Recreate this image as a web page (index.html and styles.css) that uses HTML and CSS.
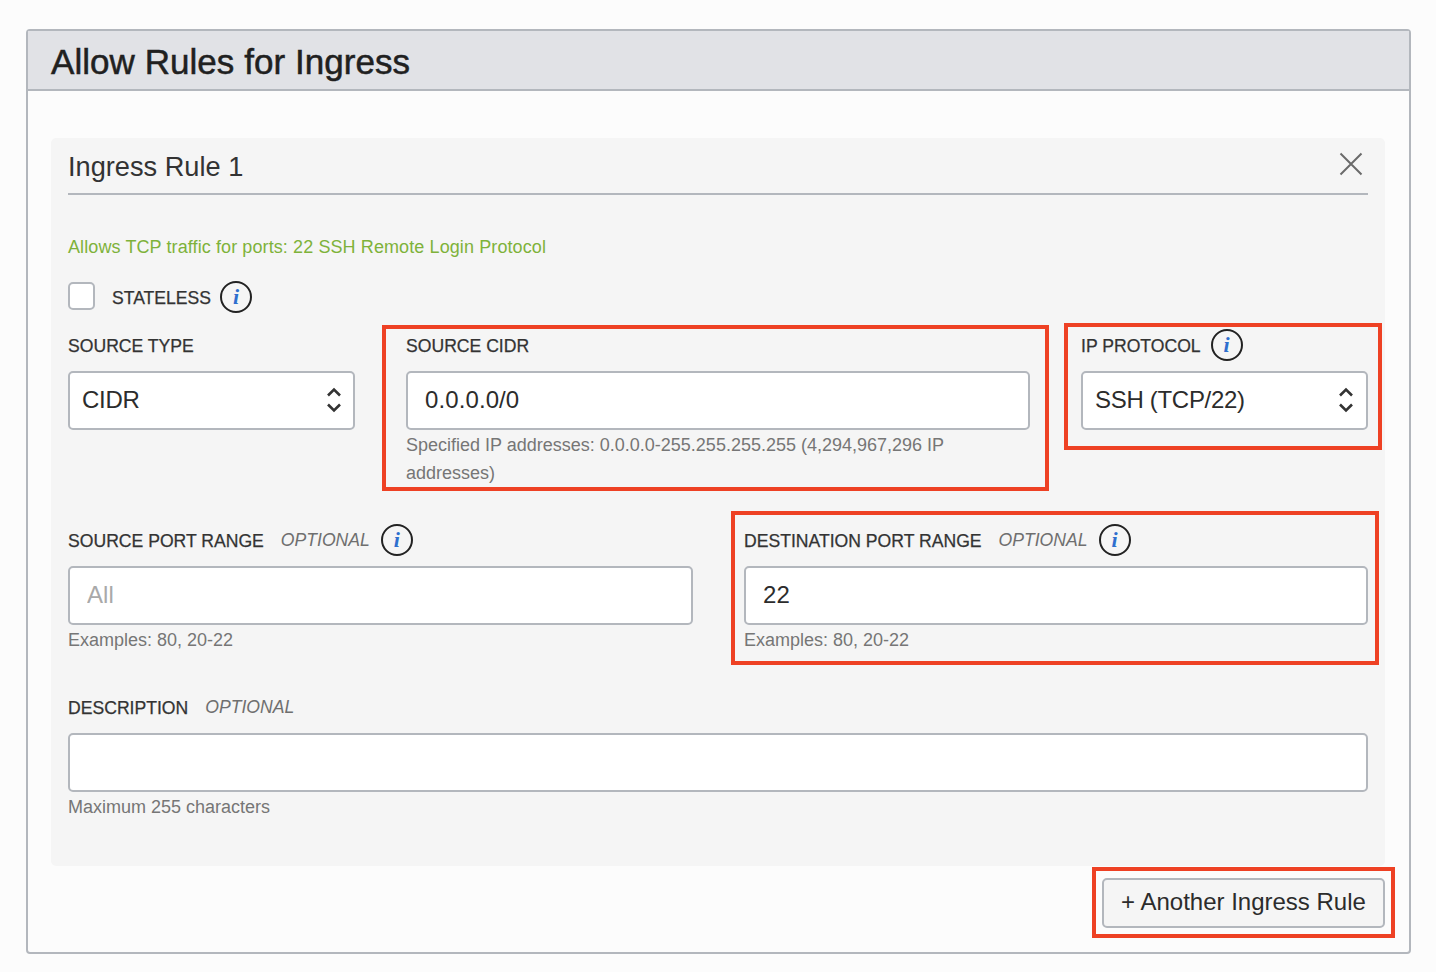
FILE: index.html
```html
<!DOCTYPE html>
<html lang="en">
<head>
    <meta charset="UTF-8">
    <title>Allow Rules for Ingress</title>
    <link rel="stylesheet" href="styles.css">
</head>
<body>
    <div class="panel">
        <div class="panel-header">
            <h1>Allow Rules for Ingress</h1>
        </div>
        <div class="panel-body">
            <div class="rule-card">
                <div class="rule-head">
                    <h2>Ingress Rule 1</h2>
                    <svg class="close-icon" width="24" height="24" viewBox="0 0 24 24">
                        <path d="M1.5 1.5 L22.5 22.5 M22.5 1.5 L1.5 22.5"></path>
                    </svg>
                </div>

                <p class="rule-note">Allows TCP traffic for ports: 22 SSH Remote Login Protocol</p>

                <div class="stateless-row">
                    <input class="check" type="checkbox">
                    <label class="field-label stateless-label">STATELESS</label>
                    <span class="info"><span class="info-i">i</span></span>
                </div>

                <div class="row row-three">
                    <div class="field">
                        <div class="label-row"><label class="field-label">SOURCE TYPE</label></div>
                        <div class="select-box">
                            <select class="control"><option>CIDR</option></select>
                            <svg class="updown" width="16" height="30" viewBox="0 0 16 30">
                                <path d="M2 10.5 L8 4.5 L14 10.5 M2 19.5 L8 25.5 L14 19.5"></path>
                            </svg>
                        </div>
                    </div>
                    <div class="field callout callout-cidr">
                        <div class="label-row"><label class="field-label">SOURCE CIDR</label></div>
                        <input class="control control-pad" type="text" value="0.0.0.0/0">
                        <p class="help">Specified IP addresses: 0.0.0.0-255.255.255.255 (4,294,967,296 IP addresses)</p>
                    </div>
                    <div class="field callout callout-protocol">
                        <div class="label-row">
                            <label class="field-label">IP PROTOCOL</label>
                            <span class="info"><span class="info-i">i</span></span>
                        </div>
                        <div class="select-box">
                            <select class="control"><option>SSH (TCP/22)</option></select>
                            <svg class="updown" width="16" height="30" viewBox="0 0 16 30">
                                <path d="M2 10.5 L8 4.5 L14 10.5 M2 19.5 L8 25.5 L14 19.5"></path>
                            </svg>
                        </div>
                    </div>
                </div>

                <div class="row row-two">
                    <div class="field">
                        <div class="label-row">
                            <label class="field-label">SOURCE PORT RANGE</label>
                            <span class="optional">OPTIONAL</span>
                            <span class="info"><span class="info-i">i</span></span>
                        </div>
                        <input class="control control-pad" type="text" placeholder="All">
                        <p class="help">Examples: 80, 20-22</p>
                    </div>
                    <div class="field callout callout-dest">
                        <div class="label-row">
                            <label class="field-label">DESTINATION PORT RANGE</label>
                            <span class="optional">OPTIONAL</span>
                            <span class="info"><span class="info-i">i</span></span>
                        </div>
                        <input class="control control-pad" type="text" value="22">
                        <p class="help">Examples: 80, 20-22</p>
                    </div>
                </div>

                <div class="row">
                    <div class="field">
                        <div class="label-row">
                            <label class="field-label">DESCRIPTION</label>
                            <span class="optional">OPTIONAL</span>
                        </div>
                        <input class="control control-pad" type="text">
                        <p class="help">Maximum 255 characters</p>
                    </div>
                </div>
            </div>

            <div class="actions">
                <div class="callout callout-button">
                    <button class="add-button" type="button">+ Another Ingress Rule</button>
                </div>
            </div>
        </div>
    </div>
</body>
</html>
```

FILE: styles.css
```css
* {
    box-sizing: border-box;
}

body {
    font-family: "Liberation Sans", Arial, sans-serif;
    background-color: #fcfcfc;
    color: #2c2c2c;
    margin: 0;
    padding: 29px 25px 18px 26px;
}

.panel {
    border: 2px solid #b3b7bd;
    border-radius: 4px;
    height: 925px;
}

.panel-header {
    background-color: #e1e2e6;
    border-bottom: 2px solid #b3b7bd;
    height: 60px;
    padding-left: 23px;
}

h1 {
    margin: 0;
    font-size: 35px;
    font-weight: normal;
    letter-spacing: 0.05px;
    line-height: 62px;
    color: #202020;
    -webkit-text-stroke: 0.5px #202020;
}

.panel-body {
    padding: 47px 24px 0 23px;
}

.rule-card {
    background-color: #f5f5f5;
    border-radius: 5px;
    padding: 0 17px 45px;
}

.rule-head {
    display: flex;
    justify-content: space-between;
    align-items: center;
    height: 57px;
    border-bottom: 2px solid #b3b7bd;
}

h2 {
    margin: 2px 0 0;
    font-size: 27.2px;
    font-weight: normal;
    color: #333;
}

.close-icon {
    margin-right: 5px;
    margin-bottom: 4px;
}

.close-icon path {
    fill: none;
    stroke: #6a6a6a;
    stroke-width: 2;
}

.rule-note {
    margin: 38px 0 0;
    font-size: 18px;
    letter-spacing: 0.1px;
    line-height: 28px;
    color: #7eb23a;
}

.stateless-row {
    display: flex;
    align-items: center;
    height: 32px;
    margin-top: 20px;
}

.check {
    appearance: none;
    width: 27px;
    height: 28px;
    margin: 0 17px 2px 0;
    background-color: #fff;
    border: 2px solid #b3b7bd;
    border-radius: 5px;
}

.stateless-label {
    margin-right: 9px;
}

.field-label {
    margin-top: 2px;
    font-size: 17.6px;
    color: #333;
    -webkit-text-stroke: 0.25px #333;
}

.info {
    display: inline-flex;
    justify-content: center;
    align-items: center;
    width: 32px;
    height: 32px;
    border: 2px solid #222;
    border-radius: 50%;
}

.info-i {
    font-family: "Liberation Serif", serif;
    font-style: italic;
    font-weight: bold;
    font-size: 22px;
    line-height: 1;
    color: #2e6fce;
}

.row {
    display: grid;
    column-gap: 51px;
    margin-top: 37px;
}

.row-three {
    grid-template-columns: 287px 1fr 287px;
    margin-top: 16px;
}

.row-two {
    grid-template-columns: 625px 1fr;
}

.field {
    position: relative;
    min-width: 0;
}

.label-row {
    display: flex;
    align-items: center;
    height: 32px;
    margin-bottom: 10px;
}

.label-row .info {
    margin-left: 10px;
}

.optional {
    margin-left: 17px;
    font-size: 17.6px;
    font-style: italic;
    color: #6f6f6f;
}

.label-row .optional + .info {
    margin-left: 11px;
}

.control {
    display: block;
    width: 100%;
    height: 59px;
    padding: 0 12px 2px;
    font-family: inherit;
    font-size: 24px;
    letter-spacing: -0.3px;
    color: #2c2c2c;
    background-color: #fff;
    border: 2px solid #b3b7bd;
    border-radius: 5px;
    outline: none;
    appearance: none;
}

.control-pad {
    padding: 0 16px 2px 17px;
    letter-spacing: 0.1px;
}

.control::placeholder {
    color: #a9a9a9;
    opacity: 1;
}

.select-box {
    position: relative;
}

.updown {
    position: absolute;
    top: 14px;
    right: 13px;
}

.callout-protocol .updown {
    right: 14px;
}

.updown path {
    fill: none;
    stroke: #333;
    stroke-width: 2.6;
}

.help {
    margin: 1px 0 0;
    font-size: 18px;
    line-height: 28px;
    color: #767676;
}

.actions {
    display: flex;
    justify-content: flex-end;
    margin-top: 12px;
}

.add-button {
    display: block;
    width: 283px;
    height: 50px;
    padding: 0 0 2px;
    font-family: inherit;
    font-size: 24px;
    color: #2c2c2c;
    background-color: #f5f5f5;
    border: 2px solid #b3b7bd;
    border-radius: 5px;
}

/* red annotation boxes drawn over the form */
.callout {
    position: relative;
}

.callout::after {
    content: "";
    position: absolute;
    border: 4px solid #ee4124;
    pointer-events: none;
}

.callout-cidr::after {
    inset: -4px -19px -4px -24px;
}

.callout-protocol {
    align-self: start;
}

.callout-protocol::after {
    inset: -6px -14px -20px -17px;
}

.callout-dest::after {
    inset: -13px -11px -11px -13px;
}

.callout-button::after {
    inset: -11px -10px -10px -10px;
}
```
